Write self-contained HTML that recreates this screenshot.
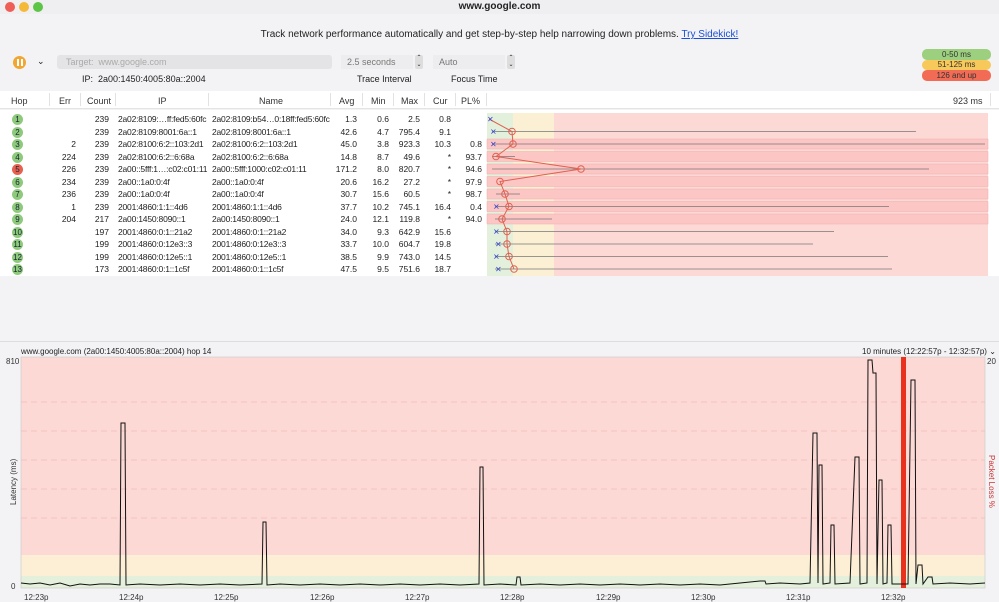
<!DOCTYPE html><html><head><meta charset="utf-8"><style>
*{margin:0;padding:0;box-sizing:border-box}
body{width:999px;height:602px;overflow:hidden;background:#f3f3f5;font-family:"Liberation Sans",sans-serif;font-size:9px;color:#222;position:relative}
.a{position:absolute;white-space:nowrap}
.r{text-align:right}
.hdr{position:absolute;top:91px;left:0;width:999px;height:18px;background:#fff;border-bottom:1px solid #e4e4e4}
.hdr span{position:absolute;top:5px;color:#333}
.dv{position:absolute;top:2px;width:1px;height:13px;background:#e2e2e2}
.tbl{position:absolute;top:110px;left:0;width:999px;height:166px;background:#fff}
.tbl .a{font-size:8.5px}
.b{position:absolute;width:11px;height:11px;border-radius:50%;background:#8fca7c;font-size:8px;text-align:center;line-height:11px;color:#123}
</style></head><body>
<div class="a" style="left:0;top:0;width:999px;height:14px;background:#efeff1"></div>
<div class="a" style="left:5px;top:2px;width:10px;height:10px;border-radius:50%;background:#ee5e57"></div>
<div class="a" style="left:19px;top:2px;width:10px;height:10px;border-radius:50%;background:#f5b93a"></div>
<div class="a" style="left:33px;top:2px;width:10px;height:10px;border-radius:50%;background:#5cc545"></div>
<div class="a" style="left:0;top:1px;width:999px;text-align:center;font-weight:bold;font-size:10px">www.google.com</div>
<div class="a" style="left:0;top:29px;width:999px;text-align:center;font-size:10px">Track network performance automatically and get step-by-step help narrowing down problems. <span style="color:#1a4fd6;text-decoration:underline">Try Sidekick!</span></div>
<div class="a" style="left:13px;top:56px;width:13px;height:13px;border-radius:50%;background:#f0a630"></div>
<div class="a" style="left:17px;top:59px;width:2px;height:7px;background:#fff"></div><div class="a" style="left:21px;top:59px;width:2px;height:7px;background:#fff"></div>
<div class="a" style="left:37px;top:56px;font-size:9px">⌄</div>
<div class="a" style="left:57px;top:55px;width:275px;height:14px;background:#e4e4e6;border-radius:3px;color:#aaa;padding:2px 9px">Target:&nbsp; www.google.com</div>
<div class="a" style="left:341px;top:55px;width:72px;height:14px;background:#ededef;color:#777;padding:2px 6px">2.5 seconds</div>
<div class="a" style="left:415px;top:55px;width:8px;height:14px;background:#ddd;border-radius:2px;font-size:6px;line-height:7px;text-align:center">⌃<br>⌄</div>
<div class="a" style="left:433px;top:55px;width:72px;height:14px;background:#ededef;color:#777;padding:2px 6px">Auto</div>
<div class="a" style="left:507px;top:55px;width:8px;height:14px;background:#ddd;border-radius:2px;font-size:6px;line-height:7px;text-align:center">⌃<br>⌄</div>
<div class="a" style="left:82px;top:74px">IP:&nbsp; 2a00:1450:4005:80a::2004</div>
<div class="a" style="left:357px;top:74px">Trace Interval</div>
<div class="a" style="left:451px;top:74px">Focus Time</div>
<div class="a" style="left:922px;top:49px;width:69px;height:11px;border-radius:5px;background:#9ccf7e;font-size:8px;text-align:center;line-height:11px;color:#333">0-50 ms</div>
<div class="a" style="left:922px;top:60px;width:69px;height:10px;border-radius:5px;background:#f7c85a;font-size:8px;text-align:center;line-height:10px;color:#333">51-125 ms</div>
<div class="a" style="left:922px;top:70px;width:69px;height:11px;border-radius:5px;background:#f26b55;font-size:8px;text-align:center;line-height:11px;color:#333">126 and up</div>

<div class="hdr">
<span style="left:11px">Hop</span><span style="left:59px">Err</span><span style="left:87px">Count</span><span style="left:158px">IP</span><span style="left:259px">Name</span><span style="left:339px">Avg</span><span style="left:371px">Min</span><span style="left:401px">Max</span><span style="left:433px">Cur</span><span style="left:461px">PL%</span><span style="left:953px">923 ms</span>
<div class="dv" style="left:49px"></div><div class="dv" style="left:80px"></div><div class="dv" style="left:115px"></div><div class="dv" style="left:208px"></div><div class="dv" style="left:330px"></div><div class="dv" style="left:362px"></div><div class="dv" style="left:393px"></div><div class="dv" style="left:424px"></div><div class="dv" style="left:455px"></div><div class="dv" style="left:486px"></div><div class="dv" style="left:990px"></div>
</div>
<div class="tbl">
<svg class="a" style="left:0;top:0" width="999" height="166">
<rect x="487" y="3" width="26" height="163" fill="#e3f1dc"/><rect x="513" y="3" width="41" height="163" fill="#fbefd4"/><rect x="554" y="3" width="434" height="163" fill="#fdd9d6"/>
<g fill="#fbc6c4" stroke="#eeb0ae" stroke-width="0.5">
<rect x="487" y="29" width="501" height="10"/><rect x="487" y="41.5" width="501" height="10"/><rect x="487" y="54" width="501" height="10"/><rect x="487" y="66.5" width="501" height="10"/><rect x="487" y="79" width="501" height="10"/><rect x="487" y="91.5" width="501" height="10"/><rect x="487" y="104" width="501" height="10"/></g>
<g stroke="#777" stroke-width="0.8">
<line x1="492" y1="21.5" x2="916" y2="21.5"/><line x1="492" y1="34" x2="985" y2="34"/><line x1="492" y1="46.5" x2="515" y2="46.5"/><line x1="492" y1="59" x2="929" y2="59"/><line x1="496" y1="84" x2="520" y2="84"/><line x1="495" y1="96.5" x2="889" y2="96.5"/><line x1="495" y1="109" x2="552" y2="109"/><line x1="495" y1="121.5" x2="834" y2="121.5"/><line x1="495" y1="134" x2="813" y2="134"/><line x1="495" y1="146.5" x2="888" y2="146.5"/><line x1="495" y1="159" x2="892" y2="159"/></g>
<g fill="none" stroke="#e06050" stroke-width="1">
<polyline points="489,9 512,21.5 513,34 496,46.5 581,59 500,71.5 505,84 509,96.5 502,109 507,121.5 507,134 509,146.5 514,159"/>
<circle cx="512" cy="21.5" r="3.3"/><circle cx="513" cy="34" r="3.3"/><circle cx="496" cy="46.5" r="3.3"/><circle cx="581" cy="59" r="3.3"/><circle cx="500" cy="71.5" r="3.3"/><circle cx="505" cy="84" r="3.3"/><circle cx="509" cy="96.5" r="3.3"/><circle cx="502" cy="109" r="3.3"/><circle cx="507" cy="121.5" r="3.3"/><circle cx="507" cy="134" r="3.3"/><circle cx="509" cy="146.5" r="3.3"/><circle cx="514" cy="159" r="3.3"/></g>
<g fill="#3a4ad0" font-size="8" font-family="Liberation Sans"><text x="487" y="12">✕</text><text x="490" y="24.5">✕</text><text x="490" y="37">✕</text><text x="493" y="99.5">✕</text><text x="493" y="124.5">✕</text><text x="495" y="137">✕</text><text x="493" y="149.5">✕</text><text x="495" y="162">✕</text></g>
</svg>
<div id="rows"></div>
</div>
<div class="a" style="left:0;top:341px;width:999px;height:1px;background:#ddd"></div>
<div class="a" style="left:21px;top:347px;font-size:8px">www.google.com (2a00:1450:4005:80a::2004) hop 14</div>
<div class="a" style="left:862px;top:347px;font-size:8px">10 minutes (12:22:57p - 12:32:57p) ⌄</div>
<svg class="a" style="left:0;top:355px" width="999" height="247">
<rect x="21" y="2" width="964" height="198" fill="#fdd9d6"/><rect x="21" y="200" width="964" height="21" fill="#fcefd5"/><rect x="21" y="221" width="964" height="12" fill="#e4f0db"/>
<g stroke="#f0bcb9" stroke-dasharray="6,4" stroke-width="0.7"><line x1="21" y1="47" x2="985" y2="47"/><line x1="21" y1="76" x2="985" y2="76"/><line x1="21" y1="105" x2="985" y2="105"/><line x1="21" y1="134" x2="985" y2="134"/><line x1="21" y1="163" x2="985" y2="163"/></g>
<rect x="21" y="2" width="964" height="231" fill="none" stroke="#ccc" stroke-width="0.7"/>
<rect x="901" y="2" width="5" height="231" fill="#e8321e"/>
<polyline fill="none" stroke="#111" stroke-width="1" points="21,228 30,229 40,228 50,230 60,228 70,231 80,229 90,230 100,229 110,229 120,230 121,68 125,68 126,230 140,229 160,230 180,229 200,230 220,229 240,230 262,229 263,167 266,167 267,230 280,229 300,230 320,229 340,230 360,229 380,230 400,229 420,230 440,229 460,230 479,229 480,112 483,112 484,230 500,229 516,230 517,222 520,222 521,230 540,229 560,230 580,229 600,230 620,229 640,230 660,229 680,230 700,229 720,230 740,228 760,226 765,226 766,229 780,228 800,229 810,228 813,78 817,78 818,228 819,110 822,110 823,229 830,228 831,170 834,170 835,229 850,228 855,102 859,102 860,229 867,228 868,5 872,5 873,18 876,18 877,229 879,125 882,125 883,229 887,228 888,170 891,170 892,229 900,229 908,229 911,25 915,25 916,229 918,210 922,210 923,229 928,222 932,222 933,229 950,228 970,229 985,228"/>
<g font-size="8" fill="#333" font-family="Liberation Sans"><text x="6" y="9">810</text><text x="11" y="234">0</text><text x="987" y="9">20</text>
<text x="24" y="245">12:23p</text><text x="119" y="245">12:24p</text><text x="214" y="245">12:25p</text><text x="310" y="245">12:26p</text><text x="405" y="245">12:27p</text><text x="500" y="245">12:28p</text><text x="596" y="245">12:29p</text><text x="691" y="245">12:30p</text><text x="786" y="245">12:31p</text><text x="881" y="245">12:32p</text>
<text transform="translate(16,150) rotate(-90)">Latency (ms)</text><text transform="translate(989,100) rotate(90)" fill="#c33">Packet Loss %</text></g>
</svg>
<script>
var d=[["","239","2a02:8109:…ff:fed5:60fc","2a02:8109:b54…0:18ff:fed5:60fc","1.3","0.6","2.5","0.8",""],["","239","2a02:8109:8001:6a::1","2a02:8109:8001:6a::1","42.6","4.7","795.4","9.1",""],["2","239","2a02:8100:6:2::103:2d1","2a02:8100:6:2::103:2d1","45.0","3.8","923.3","10.3","0.8"],["224","239","2a02:8100:6:2::6:68a","2a02:8100:6:2::6:68a","14.8","8.7","49.6","*","93.7"],["226","239","2a00::5fff:1…:c02:c01:11","2a00::5fff:1000:c02:c01:11","171.2","8.0","820.7","*","94.6"],["234","239","2a00::1a0:0:4f","2a00::1a0:0:4f","20.6","16.2","27.2","*","97.9"],["236","239","2a00::1a0:0:4f","2a00::1a0:0:4f","30.7","15.6","60.5","*","98.7"],["1","239","2001:4860:1:1::4d6","2001:4860:1:1::4d6","37.7","10.2","745.1","16.4","0.4"],["204","217","2a00:1450:8090::1","2a00:1450:8090::1","24.0","12.1","119.8","*","94.0"],["","197","2001:4860:0:1::21a2","2001:4860:0:1::21a2","34.0","9.3","642.9","15.6",""],["","199","2001:4860:0:12e3::3","2001:4860:0:12e3::3","33.7","10.0","604.7","19.8",""],["","199","2001:4860:0:12e5::1","2001:4860:0:12e5::1","38.5","9.9","743.0","14.5",""],["","173","2001:4860:0:1::1c5f","2001:4860:0:1::1c5f","47.5","9.5","751.6","18.7",""]];
var h="";d.forEach(function(r,i){var y=4+12.5*i;
h+='<div class="b" style="left:12px;top:'+(y)+'px;'+(i==4?'background:#e8604f;':'')+'">'+(i+1)+'</div>';
var R=[[76,r[0]],[109,r[1]],[357,r[4]],[389,r[5]],[420,r[6]],[451,r[7]],[482,r[8]]];
R.forEach(function(c){h+='<div class="a r" style="left:'+(c[0]-50)+'px;width:50px;top:'+(y)+'px">'+c[1]+'</div>'});
h+='<div class="a" style="left:118px;top:'+y+'px;letter-spacing:-0.2px">'+r[2]+'</div><div class="a" style="left:212px;top:'+y+'px;letter-spacing:-0.2px">'+r[3]+'</div>';});
document.getElementById("rows").innerHTML=h;
</script>
</body></html>
